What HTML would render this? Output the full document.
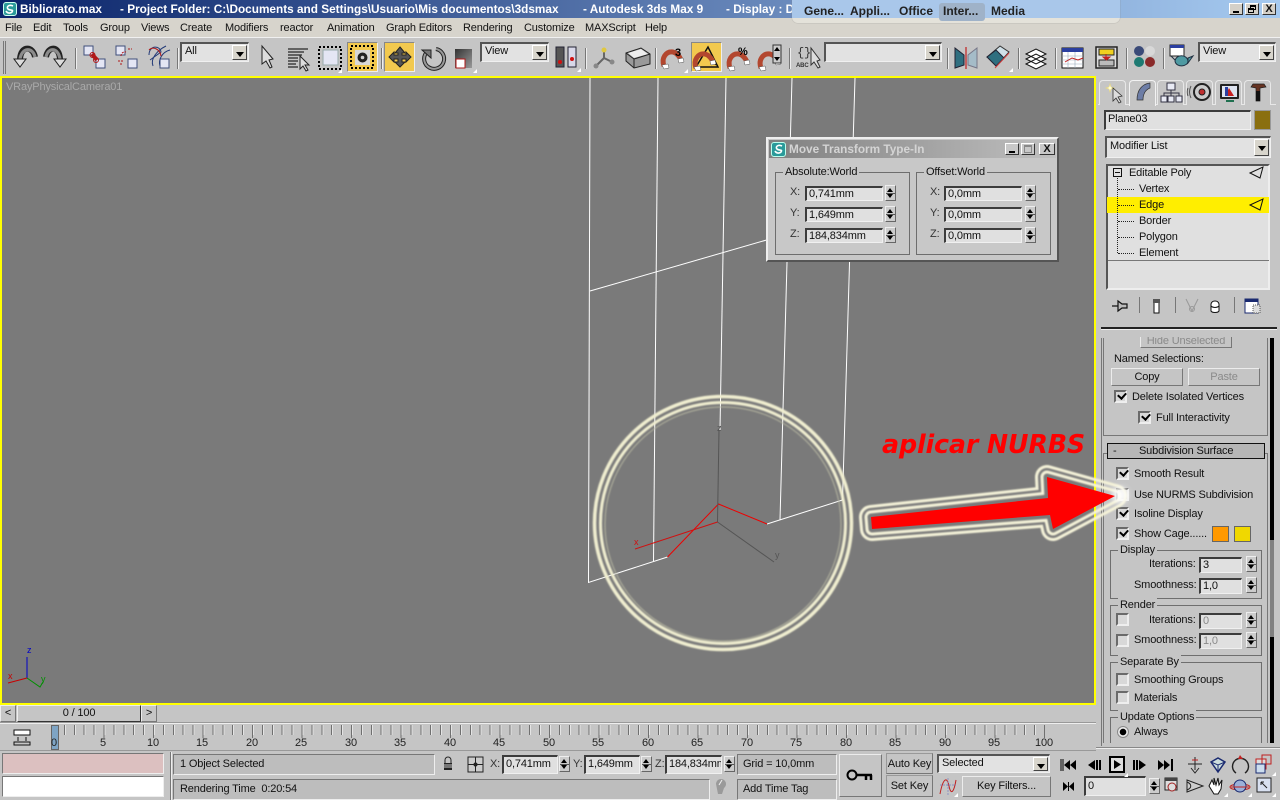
<!DOCTYPE html>
<html><head><meta charset="utf-8"><title>3ds Max</title>
<style>
html,body{margin:0;padding:0;width:1280px;height:800px;overflow:hidden;background:#c5c5c5;font:11px/14px "Liberation Sans",sans-serif;color:#111;letter-spacing:-.15px}
div,span{box-sizing:border-box}
.a{position:absolute}
.t{position:absolute;white-space:nowrap;line-height:14px;font-size:11px}
.h{font-size:11.8px;font-weight:bold;color:#fff;letter-spacing:0}
.f{position:absolute;background:#e0e0e0;border-top:2px solid #3c3c3c;border-left:2px solid #3c3c3c;border-right:1px solid #f0f0f0;border-bottom:1px solid #f0f0f0;line-height:12px;padding-left:2px;white-space:nowrap;overflow:hidden}
.d{color:#8a8a8a}
.sp{position:absolute;width:11px;height:16px;background:linear-gradient(#ccc 0 7px,#555 7px 8px,#ccc 8px);border:1px solid;border-color:#eee #666 #666 #eee}
.sp:before,.sp:after{content:"";position:absolute;left:1px;border-left:3.5px solid transparent;border-right:3.5px solid transparent}
.sp:before{top:2px;border-bottom:4px solid #000}
.sp:after{bottom:2px;border-top:4px solid #000}
.dd{position:absolute;background:#e2e2e2;border-top:2px solid #555;border-left:2px solid #555;border-right:1px solid #f0f0f0;border-bottom:1px solid #f0f0f0;line-height:15px;padding-left:3px;white-space:nowrap}
.ab{position:absolute;right:1px;top:1px;bottom:1px;width:15px;background:#d8d5cc;border:1px solid;border-color:#fff #444 #444 #fff}
.ab:after{content:"";position:absolute;left:3px;top:6px;border-left:4px solid transparent;border-right:4px solid transparent;border-top:5px solid #000}
.b{position:absolute;background:#c5c5c5;border:1px solid;border-color:#ececec #777 #777 #ececec;text-align:center;white-space:nowrap}
.c{position:absolute;width:13px;height:13px;background:#d8d8d8;border:2px solid;border-color:#6a6a6a #eee #eee #6a6a6a}
.k:after{content:"";position:absolute;left:2px;top:0;width:6px;height:4px;border-left:2px solid #000;border-bottom:2px solid #000;transform:rotate(-48deg)}
.g{position:absolute;border:1px solid #6e6e6e}
.l{position:absolute;top:-8px;left:7px;background:#c5c5c5;padding:0 2px;line-height:14px;white-space:nowrap}
.s{position:absolute;top:48px;width:2px;height:21px;border-left:1px solid #777;border-right:1px solid #eee}
.w{position:absolute;top:3px;width:14px;height:12px;background:#d4d0c8;border:1px solid;border-color:#fff #333 #333 #fff}
.y{position:absolute;background:#f2c94f;border:1px solid;border-color:#888 #eee #eee #888}
.n{position:absolute;top:736px;width:24px;text-align:center;line-height:14px;font-size:11px;color:#222}
.tab{position:absolute;top:80px;width:27px;height:25px;background:#c5c5c5;border:1px solid #e8e8e8;border-bottom:none;border-radius:4px 4px 0 0}
</style></head><body>

<!-- Title bar -->
<div class="a" style="left:0;top:0;width:1280px;height:18px;background:linear-gradient(90deg,#0a246a,#a6caf0)"></div>
<div class="t h" style="left:20px;top:2px">Bibliorato.max</div>
<div class="t h" style="left:120px;top:2px">- Project Folder: C:\Documents and Settings\Usuario\Mis documentos\3dsmax</div>
<div class="t h" style="left:583px;top:2px">- Autodesk 3ds Max 9</div>
<div class="t h" style="left:726px;top:2px">- Display : Direct 3D</div>
<div class="a" style="left:3px;top:2px;width:14px;height:14px;background:#2a9a9a;border:1px solid #cfe;border-radius:3px"></div>
<div class="w" style="left:1229px"><div class="a" style="left:3px;bottom:1px;width:6px;height:2px;background:#000"></div></div>
<div class="w" style="left:1245px"><div class="a" style="left:4px;top:1px;width:6px;height:5px;border:1px solid #000;border-top-width:2px"></div><div class="a" style="left:2px;top:4px;width:6px;height:5px;border:1px solid #000;border-top-width:2px;background:#d4d0c8"></div></div>
<div class="w" style="left:1262px;font-size:11px;line-height:10px;text-align:center;font-weight:bold">X</div>

<!-- Menu row -->
<div class="a" style="left:0;top:18px;width:1280px;height:20px;background:#d7d4cc;border-bottom:1px solid #f0f0f0"></div>
<div class="t" style="left:5px;top:21px">File</div>
<div class="t" style="left:33px;top:21px">Edit</div>
<div class="t" style="left:63px;top:21px">Tools</div>
<div class="t" style="left:100px;top:21px">Group</div>
<div class="t" style="left:141px;top:21px">Views</div>
<div class="t" style="left:180px;top:21px">Create</div>
<div class="t" style="left:225px;top:21px">Modifiers</div>
<div class="t" style="left:280px;top:21px">reactor</div>
<div class="t" style="left:327px;top:21px">Animation</div>
<div class="t" style="left:386px;top:21px">Graph Editors</div>
<div class="t" style="left:463px;top:21px">Rendering</div>
<div class="t" style="left:524px;top:21px">Customize</div>
<div class="t" style="left:585px;top:21px">MAXScript</div>
<div class="t" style="left:645px;top:21px">Help</div>

<!-- Overlay switcher -->
<div class="a" style="left:792px;top:-4px;width:328px;height:27px;border-radius:0 0 6px 6px;background:linear-gradient(#a9c7ea 0 22px,#e4e2da 22px);box-shadow:0 0 1px #888"></div>
<div class="a" style="left:939px;top:3px;width:46px;height:18px;background:#9fb2c8;border-radius:3px"></div>
<div class="t" style="left:804px;top:4px;font-size:12px;font-weight:bold;color:#222;letter-spacing:0">Gene...</div>
<div class="t" style="left:850px;top:4px;font-size:12px;font-weight:bold;color:#222;letter-spacing:0">Appli...</div>
<div class="t" style="left:899px;top:4px;font-size:12px;font-weight:bold;color:#222;letter-spacing:0">Office</div>
<div class="t" style="left:943px;top:4px;font-size:12px;font-weight:bold;color:#222;letter-spacing:0">Inter...</div>
<div class="t" style="left:991px;top:4px;font-size:12px;font-weight:bold;color:#222;letter-spacing:0">Media</div>

<!-- Toolbar -->
<div class="a" style="left:3px;top:41px;width:3px;height:33px;border-left:1px solid #777;border-right:1px solid #777"></div>
<div class="s" style="left:75px"></div><div class="s" style="left:177px"></div><div class="s" style="left:381px"></div>
<div class="s" style="left:585px"></div><div class="s" style="left:655px"></div><div class="s" style="left:789px"></div>
<div class="s" style="left:947px"></div><div class="s" style="left:1018px"></div><div class="s" style="left:1055px"></div>
<div class="s" style="left:1126px"></div><div class="s" style="left:1163px"></div>
<div class="dd" style="left:180px;top:42px;width:69px;height:20px">All<span class="ab"></span></div>
<div class="dd" style="left:480px;top:42px;width:69px;height:20px">View<span class="ab"></span></div>
<div class="dd" style="left:824px;top:42px;width:118px;height:20px"><span class="ab"></span></div>
<div class="dd" style="left:1198px;top:42px;width:78px;height:20px">View<span class="ab"></span></div>
<div class="y" style="left:347px;top:42px;width:31px;height:30px"></div>
<div class="y" style="left:384px;top:42px;width:31px;height:30px"></div>
<div class="y" style="left:691px;top:42px;width:31px;height:30px"></div>

<!-- Viewport -->
<div class="a" style="left:0;top:76px;width:1096px;height:629px;background:#7a7a7a;border:2px solid #ffff00"></div>
<div class="t" style="left:6px;top:80px;color:#a9a9a9">VRayPhysicalCamera01</div>
<svg class="a" style="left:0;top:0" width="1280" height="800" viewBox="0 0 1280 800">
 <g fill="none" stroke="#fff" stroke-width="1">
  <path d="M590 78L588.5 582.5L667.5 557"/><path d="M658 78L653.5 561"/><path d="M726 78L720 430"/>
  <path d="M792 78L780 520"/><path d="M855 78L842.5 500L767 524"/><path d="M590 291L770 239"/>
 </g>
 <path d="M667.5 557L718.5 504L767 524" fill="none" stroke="#ee0000"/>
 <path d="M719 430L717.5 522L774 562" fill="none" stroke="#555"/>
 <path d="M717.5 522L635 549" fill="none" stroke="#d01010"/>
 <text x="634" y="545" font-family="Liberation Sans" font-size="9" fill="#d01010">x</text>
 <text x="775" y="558" font-family="Liberation Sans" font-size="9" fill="#555">y</text>
 <text x="717" y="431" font-family="Liberation Sans" font-size="9" fill="#555">z</text>
 <path d="M27 678V657" stroke="#0000c8" fill="none"/><path d="M27 678L8 683" stroke="#c80000" fill="none"/><path d="M27 678L40 687L43 682" stroke="#009000" fill="none"/>
 <text x="27" y="653" font-family="Liberation Sans" font-size="9" fill="#0000c8">z</text>
 <text x="8" y="679" font-family="Liberation Sans" font-size="9" fill="#c80000">x</text>
 <text x="41" y="682" font-family="Liberation Sans" font-size="9" fill="#009000">y</text>
</svg>

<!-- Move Transform dialog -->
<div class="a" style="left:766px;top:137px;width:293px;height:125px;background:#c8c8c8;border:2px solid;border-color:#eee #555 #555 #eee"></div>
<div class="a" style="left:769px;top:140px;width:287px;height:18px;background:linear-gradient(90deg,#808080,#c0c0c0)"></div>
<div class="a" style="left:771px;top:142px;width:15px;height:15px;background:#2a9a9a;border:1px solid #bfe;border-radius:3px"></div>
<div class="t" style="left:789px;top:142px;font-size:11.8px;letter-spacing:0;font-weight:bold;color:#d4d4d4">Move Transform Type-In</div>
<div class="w" style="left:1005px;top:143px;background:#c8c8c8"><div class="a" style="left:3px;bottom:1px;width:6px;height:2px;background:#000"></div></div>
<div class="w" style="left:1021px;top:143px;background:#c8c8c8"><div class="a" style="left:2px;top:1px;width:8px;height:8px;border:1px solid #888;border-top-width:2px"></div></div>
<div class="w" style="left:1039px;top:143px;width:16px;background:#c8c8c8;text-align:center;line-height:10px;font-weight:bold">X</div>
<div class="g" style="left:775px;top:172px;width:135px;height:83px"><span class="l" style="background:#c8c8c8">Absolute:World</span></div>
<div class="g" style="left:916px;top:172px;width:135px;height:83px"><span class="l" style="background:#c8c8c8">Offset:World</span></div>
<div class="t" style="left:790px;top:185px;color:#333">X:</div><div class="f" style="left:805px;top:186px;width:78px;height:15px">0,741mm</div><div class="sp" style="left:885px;top:185px"></div>
<div class="t" style="left:790px;top:206px;color:#333">Y:</div><div class="f" style="left:805px;top:207px;width:78px;height:15px">1,649mm</div><div class="sp" style="left:885px;top:206px"></div>
<div class="t" style="left:790px;top:227px;color:#333">Z:</div><div class="f" style="left:805px;top:228px;width:78px;height:15px">184,834mm</div><div class="sp" style="left:885px;top:227px"></div>
<div class="t" style="left:930px;top:185px;color:#333">X:</div><div class="f" style="left:944px;top:186px;width:78px;height:15px">0,0mm</div><div class="sp" style="left:1025px;top:185px"></div>
<div class="t" style="left:930px;top:206px;color:#333">Y:</div><div class="f" style="left:944px;top:207px;width:78px;height:15px">0,0mm</div><div class="sp" style="left:1025px;top:206px"></div>
<div class="t" style="left:930px;top:227px;color:#333">Z:</div><div class="f" style="left:944px;top:228px;width:78px;height:15px">0,0mm</div><div class="sp" style="left:1025px;top:227px"></div>

<!-- Right panel -->
<div class="a" style="left:1096px;top:76px;width:184px;height:674px;background:#c5c5c5"></div>
<div class="a" style="left:1098px;top:104px;width:178px;height:1px;background:#e8e8e8"></div>
<div class="tab" style="left:1099px"></div><div class="tab" style="left:1129px;height:26px;border-color:#f2f2f2"></div><div class="tab" style="left:1157px"></div><div class="tab" style="left:1186px"></div><div class="tab" style="left:1215px"></div><div class="tab" style="left:1244px"></div>
<div class="f" style="left:1104px;top:110px;width:147px;height:20px;line-height:15px">Plane03</div>
<div class="a" style="left:1254px;top:110px;width:17px;height:20px;background:#8a6f0f;border:1px solid #999"></div>
<div class="dd" style="left:1105px;top:136px;width:166px;height:22px;line-height:17px">Modifier List<span class="ab"></span></div>
<div class="a" style="left:1106px;top:164px;width:164px;height:126px;background:#e0e0e0;border:2px solid;border-color:#555 #eee #eee #555"></div>
<div class="a" style="left:1108px;top:260px;width:161px;height:1px;background:#777"></div>
<div class="a" style="left:1107px;top:197px;width:162px;height:16px;background:#ffee00"></div>
<div class="a" style="left:1113px;top:168px;width:9px;height:9px;border:1px solid #111"><div class="a" style="left:1px;top:3px;width:5px;height:1px;background:#111"></div></div>
<div class="a" style="left:1117px;top:178px;height:75px;border-left:1px dotted #222"></div>
<div class="a" style="left:1118px;top:189px;width:16px;border-top:1px dotted #222"></div>
<div class="a" style="left:1118px;top:205px;width:16px;border-top:1px dotted #222"></div>
<div class="a" style="left:1118px;top:221px;width:16px;border-top:1px dotted #222"></div>
<div class="a" style="left:1118px;top:237px;width:16px;border-top:1px dotted #222"></div>
<div class="a" style="left:1118px;top:253px;width:16px;border-top:1px dotted #222"></div>
<div class="t" style="left:1129px;top:166px">Editable Poly</div>
<div class="t" style="left:1139px;top:182px">Vertex</div>
<div class="t" style="left:1139px;top:198px">Edge</div>
<div class="t" style="left:1139px;top:214px">Border</div>
<div class="t" style="left:1139px;top:230px">Polygon</div>
<div class="t" style="left:1139px;top:246px">Element</div>
<div class="a" style="left:1139px;top:297px;width:1px;height:16px;background:#777"></div>
<div class="a" style="left:1175px;top:297px;width:1px;height:16px;background:#777"></div>
<div class="a" style="left:1234px;top:297px;width:1px;height:16px;background:#777"></div>
<div class="a" style="left:1101px;top:327px;width:176px;height:2px;background:#222"></div>
<div class="a" style="left:1101px;top:329px;width:176px;height:1px;background:#eee"></div>

<!-- Scroll rollouts -->
<div class="a" style="left:1101px;top:338px;width:1px;height:408px;background:#777"></div>
<div class="a" style="left:1270px;top:338px;width:4px;height:202px;background:#000"></div>
<div class="a" style="left:1270px;top:540px;width:4px;height:97px;background:#808080"></div>
<div class="a" style="left:1270px;top:637px;width:4px;height:106px;background:#000"></div>
<div class="a" style="left:1103px;top:338px;width:165px;height:98px;border:1px solid #777;border-top:none"></div>
<div class="b" style="left:1140px;top:333px;width:92px;height:15px;line-height:14px;color:#8a8a8a">Hide Unselected</div>
<div class="a" style="left:1096px;top:330px;width:184px;height:7px;background:#c5c5c5"></div>
<div class="t" style="left:1114px;top:352px">Named Selections:</div>
<div class="b" style="left:1111px;top:368px;width:72px;height:18px;line-height:16px">Copy</div>
<div class="b d" style="left:1188px;top:368px;width:72px;height:18px;line-height:16px">Paste</div>
<div class="c k" style="left:1114px;top:390px"></div><div class="t" style="left:1132px;top:390px">Delete Isolated Vertices</div>
<div class="c k" style="left:1138px;top:411px"></div><div class="t" style="left:1156px;top:411px">Full Interactivity</div>

<div class="a" style="left:1103px;top:453px;width:165px;height:290px;border:1px solid #777;border-bottom:none"></div>
<div class="a" style="left:1107px;top:443px;width:158px;height:16px;background:#b6b6b6;border:1px solid #111"></div>
<div class="t" style="left:1113px;top:444px">-</div>
<div class="t" style="left:1139px;top:444px">Subdivision Surface</div>
<div class="c k" style="left:1116px;top:467px"></div><div class="t" style="left:1134px;top:467px">Smooth Result</div>
<div class="c" style="left:1116px;top:488px"></div><div class="t" style="left:1134px;top:488px">Use NURMS Subdivision</div>
<div class="c k" style="left:1116px;top:507px"></div><div class="t" style="left:1134px;top:507px">Isoline Display</div>
<div class="c k" style="left:1116px;top:527px"></div><div class="t" style="left:1134px;top:527px">Show Cage......</div>
<div class="a" style="left:1212px;top:526px;width:17px;height:16px;background:#ff9900;border:1px solid #666"></div>
<div class="a" style="left:1234px;top:526px;width:17px;height:16px;background:#f0d800;border:1px solid #666"></div>

<div class="g" style="left:1110px;top:550px;width:152px;height:49px"><span class="l">Display</span></div>
<div class="t" style="left:1149px;top:557px">Iterations:</div><div class="f" style="left:1199px;top:557px;width:43px;height:16px">3</div><div class="sp" style="left:1246px;top:556px"></div>
<div class="t" style="left:1134px;top:578px">Smoothness:</div><div class="f" style="left:1199px;top:578px;width:43px;height:16px">1,0</div><div class="sp" style="left:1246px;top:577px"></div>
<div class="g" style="left:1110px;top:605px;width:152px;height:51px"><span class="l">Render</span></div>
<div class="c" style="left:1116px;top:613px"></div><div class="t" style="left:1149px;top:613px">Iterations:</div><div class="f d" style="left:1199px;top:613px;width:43px;height:16px">0</div><div class="sp" style="left:1246px;top:612px"></div>
<div class="c" style="left:1116px;top:634px"></div><div class="t" style="left:1134px;top:633px">Smoothness:</div><div class="f d" style="left:1199px;top:633px;width:43px;height:16px">1,0</div><div class="sp" style="left:1246px;top:632px"></div>
<div class="g" style="left:1110px;top:662px;width:152px;height:49px"><span class="l">Separate By</span></div>
<div class="c" style="left:1116px;top:673px"></div><div class="t" style="left:1134px;top:673px">Smoothing Groups</div>
<div class="c" style="left:1116px;top:691px"></div><div class="t" style="left:1134px;top:691px">Materials</div>
<div class="a" style="left:1110px;top:717px;width:152px;height:26px;border:1px solid #6e6e6e;border-bottom:none"><span class="l">Update Options</span></div>
<div class="a" style="left:1117px;top:726px;width:12px;height:12px;border-radius:50%;background:radial-gradient(circle,#000 0 3px,#e8e8e8 3.5px);border:1px solid #888"></div>
<div class="t" style="left:1134px;top:725px">Always</div>
<div class="a" style="left:1096px;top:748px;width:184px;height:1px;background:#eee"></div>
<div class="a" style="left:1096px;top:747px;width:184px;height:1px;background:#888"></div>

<!-- Time slider -->
<div class="b" style="left:0;top:705px;width:16px;height:17px;line-height:15px">&lt;</div>
<div class="b" style="left:17px;top:705px;width:124px;height:17px;line-height:15px;border-color:#eee #333 #333 #eee">0 / 100</div>
<div class="b" style="left:141px;top:705px;width:16px;height:17px;line-height:15px">&gt;</div>
<div class="a" style="left:0;top:723px;width:1096px;height:1px;background:#eee"></div>
<div class="a" style="left:0;top:722px;width:1096px;height:1px;background:#999"></div>
<div class="a" style="left:54px;top:725px;width:991px;height:10px;background:repeating-linear-gradient(90deg,#707070 0 1px,#e4e4e4 1px 2px,transparent 2px 9.9px)"></div>
<div class="a" style="left:54px;top:735px;width:991px;height:3px;background:repeating-linear-gradient(90deg,#707070 0 1px,transparent 1px 49.5px)"></div>
<div class="a" style="left:51px;top:725px;width:8px;height:25px;background:#7ea4c4;border:1px solid #666"></div>
<span class="n" style="left:42px">0</span><span class="n" style="left:91px">5</span><span class="n" style="left:141px">10</span><span class="n" style="left:190px">15</span><span class="n" style="left:240px">20</span><span class="n" style="left:289px">25</span><span class="n" style="left:339px">30</span><span class="n" style="left:388px">35</span><span class="n" style="left:438px">40</span><span class="n" style="left:487px">45</span><span class="n" style="left:537px">50</span><span class="n" style="left:586px">55</span><span class="n" style="left:636px">60</span><span class="n" style="left:685px">65</span><span class="n" style="left:735px">70</span><span class="n" style="left:784px">75</span><span class="n" style="left:834px">80</span><span class="n" style="left:883px">85</span><span class="n" style="left:933px">90</span><span class="n" style="left:982px">95</span><span class="n" style="left:1032px">100</span>

<!-- Status bar -->
<div class="a" style="left:0;top:750px;width:1096px;height:1px;background:#999"></div>
<div class="a" style="left:2px;top:753px;width:162px;height:21px;background:#dcc0c0;border:1px solid;border-color:#777 #eee #eee #777"></div>
<div class="a" style="left:2px;top:776px;width:162px;height:21px;background:#fff;border:1px solid;border-color:#777 #eee #eee #777"></div>
<div class="a" style="left:170px;top:752px;width:2px;height:48px;border-left:1px solid #777;border-right:1px solid #eee"></div>
<div class="a" style="left:173px;top:754px;width:262px;height:21px;background:#bdbdbd;border:1px solid;border-color:#777 #eee #eee #777"></div>
<div class="t" style="left:180px;top:757px">1 Object Selected</div>
<div class="a" style="left:173px;top:779px;width:537px;height:21px;background:#bdbdbd;border:1px solid;border-color:#777 #eee #eee #777"></div>
<div class="t" style="left:180px;top:782px">Rendering Time&nbsp; 0:20:54</div>
<div class="t" style="left:490px;top:757px;color:#333">X:</div><div class="f" style="left:502px;top:755px;width:56px;height:19px;line-height:15px;padding-left:2px">0,741mm</div><div class="sp" style="left:559px;top:756px"></div>
<div class="t" style="left:573px;top:757px;color:#333">Y:</div><div class="f" style="left:584px;top:755px;width:56px;height:19px;line-height:15px">1,649mm</div><div class="sp" style="left:641px;top:756px"></div>
<div class="t" style="left:655px;top:757px;color:#333">Z:</div><div class="f" style="left:665px;top:755px;width:57px;height:19px;line-height:15px">184,834mm</div><div class="sp" style="left:724px;top:756px"></div>
<div class="a" style="left:737px;top:754px;width:100px;height:21px;background:#bdbdbd;border:1px solid;border-color:#777 #eee #eee #777"></div>
<div class="t" style="left:743px;top:757px">Grid = 10,0mm</div>
<div class="a" style="left:737px;top:779px;width:100px;height:21px;background:#bdbdbd;border:1px solid;border-color:#777 #eee #eee #777"></div>
<div class="t" style="left:743px;top:782px">Add Time Tag</div>
<div class="b" style="left:839px;top:754px;width:43px;height:43px"></div>
<div class="b" style="left:886px;top:753px;width:47px;height:21px;line-height:20px;border-color:#999 #777 #777 #999">Auto Key</div>
<div class="b" style="left:886px;top:775px;width:47px;height:22px;line-height:20px;border-color:#999 #777 #777 #999">Set Key</div>
<div class="dd" style="left:937px;top:754px;width:113px;height:19px;line-height:14px">Selected<span class="ab"></span></div>
<div class="b" style="left:962px;top:776px;width:89px;height:21px;line-height:19px">Key Filters...</div>
<div class="f" style="left:1084px;top:776px;width:62px;height:20px;line-height:16px">0</div><div class="sp" style="left:1149px;top:778px"></div>

<!-- Icons -->
<svg class="a" style="left:0;top:0" width="1280" height="800" viewBox="0 0 1280 800">
 <defs>
  <g id="mag"><path d="M3 19C0 11 5 4 12 5C16 6 19 10 20 13" fill="none" stroke="#b3472f" stroke-width="5"/><path d="M1 18l6-1 1 4-5 1zM17 12l5-1 1 4-5 1z" fill="#fff" stroke="#555" stroke-width=".5"/></g>
  <g id="sq"><rect width="9" height="9" fill="#e4e6f4" stroke="#3f4f7a"/></g>
  <g id="tri"><path d="M0 4L4 4L4 0Z" fill="#fff"/></g>
  <linearGradient id="sc" x1="0" y1="0" x2="1" y2="1"><stop offset="0" stop-color="#333"/><stop offset="1" stop-color="#999"/></linearGradient>
 </defs>
 <!-- logo -->
 <path d="M13 6C9 4 6 7 8 9C10 11 14 9 12 12C10 14 7 13 6 11" fill="none" stroke="#fff" stroke-width="1.6"/>
 <path d="M782 146C778 144 775 147 777 149C779 151 783 149 781 152C779 154 776 153 775 151" fill="none" stroke="#fff" stroke-width="1.6"/>
 <!-- undo/redo -->
 <g fill="none"><path d="M35 57C33 46 21 45 20 59" stroke="#222" stroke-width="6"/><path d="M35 57C33 47 22 47 20 59" stroke="#8c8c8c" stroke-width="3.2"/></g><path d="M14 59H26L20 67Z" fill="#ddd" stroke="#222"/>
 <g fill="none"><path d="M46 57C48 46 59 45 60 59" stroke="#222" stroke-width="6"/><path d="M46 57C48 47 58 47 60 59" stroke="#8c8c8c" stroke-width="3.2"/></g><path d="M54 59H66L60 67Z" fill="#ddd" stroke="#222"/>
 <!-- link unlink bind -->
 <use href="#sq" x="84" y="46"/><use href="#sq" x="96" y="59"/><path d="M92 54L97 60" stroke="#b01818" stroke-width="4" fill="none"/><circle cx="92.5" cy="55" r="2.5" fill="none" stroke="#b01818"/><circle cx="96" cy="60" r="2.5" fill="none" stroke="#b01818"/>
 <use href="#sq" x="116" y="46"/><use href="#sq" x="128" y="59"/><path d="M121 56a4 4 0 0 1 5-4M128 49h4M118 61h5M120 64h3" stroke="#b01818" fill="none" stroke-dasharray="2 1"/>
 <use href="#sq" x="160" y="59"/><path d="M149 55C149 45 160 45 161 52L150 60M153 66C150 58 158 50 166 46M160 66C158 60 162 52 170 50" fill="none" stroke="#223a78"/><path d="M149 50C153 46 160 49 161 56" fill="none" stroke="#b01818"/>
 <!-- selects -->
 <path d="M262 46L262 64L266 61L270 68L272 67L269 60L273 59Z" fill="#ddd" stroke="#222"/>
 <path d="M288 49H308M288 52H304M288 55H302M288 58H298M288 61H298M288 64H296M288 67H298" stroke="#000" fill="none"/>
 <path d="M300 56V69L303 66L306 71L308 70L305 65L309 65Z" fill="#ddd" stroke="#222"/>
 <rect x="319" y="47" width="22" height="22" fill="none" stroke="#000" stroke-width="2" stroke-dasharray="2 2"/><rect x="323" y="50" width="15" height="15" fill="#e4e6f4" stroke="#9aa"/><use href="#tri" x="338" y="69"/>
 <rect x="351" y="46" width="22" height="22" fill="none" stroke="#000" stroke-width="2" stroke-dasharray="2 2"/><rect x="355" y="50" width="15" height="15" fill="#d8d8d8"/><circle cx="362.5" cy="57.5" r="5" fill="#222"/><circle cx="362.5" cy="57.5" r="1.8" fill="#ccc"/>
 <!-- move -->
 <path d="M400 47L405 53H402V55H406V52L411 57L406 62V59H402V62H405L400 67L395 62H398V59H394V62L389 57L394 52V55H398V53H395Z" fill="#555" stroke="#222"/>
 <!-- rotate -->
 <path d="M426 53A10 10 0 1 0 436 49" fill="none" stroke="#222" stroke-width="4"/><path d="M426 53A10 10 0 1 0 436 49" fill="none" stroke="#999" stroke-width="2"/><path d="M422 50H431V58Z" fill="#777" stroke="#222"/>
 <!-- scale -->
 <rect x="455" y="49" width="17" height="19" fill="url(#sc)"/><rect x="456" y="59" width="9" height="9" fill="#fff" stroke="#b01818"/><use href="#tri" x="473" y="69"/>
 <!-- pivot -->
 <rect x="556" y="47" width="8" height="20" fill="#555" stroke="#223"/><rect x="568" y="47" width="8" height="20" fill="#d8d8e8" stroke="#223"/><circle cx="560" cy="62" r="2" fill="#d01010"/><circle cx="572" cy="59" r="2" fill="#d01010"/><use href="#tri" x="577" y="68"/>
 <!-- manip -->
 <path d="M604 58V50M604 58L596 66M604 58L612 62" stroke="#666" stroke-width="2" fill="none"/><circle cx="604" cy="50" r="2.5" fill="#e0c840"/><circle cx="596" cy="66" r="2.5" fill="#888"/><circle cx="612" cy="62" r="2.5" fill="#888"/>
 <!-- box -->
 <path d="M626 53L641 48L650 54V64L634 68L626 61Z" fill="#999" stroke="#222"/><path d="M626 53L634 59L650 54M634 59V68" fill="none" stroke="#222"/><path d="M628 53L641 49L648 54L634 58Z" fill="#eee"/>
 <!-- snaps -->
 <use href="#mag" x="661" y="47"/><text x="675" y="56" font-family="Liberation Sans" font-size="11" font-weight="bold" fill="#000">3</text><use href="#tri" x="684" y="69"/>
 <path d="M696 67H718L708 47Z" fill="none" stroke="#111" stroke-width="1.5"/><path d="M712 55L716 65" stroke="#111" stroke-width="1.5"/>
 <use href="#mag" x="693" y="49"/>
 <use href="#mag" x="727" y="49"/><text x="738" y="55" font-family="Liberation Sans" font-size="11" font-weight="bold" fill="#000">%</text>
 <use href="#mag" x="758" y="49"/><rect x="773" y="45" width="8" height="18" fill="#ccc" stroke="#333"/><path d="M777 47L774 51H780ZM777 61L774 57H780Z" fill="#000"/>
 <!-- named sel -->
 <text x="797" y="56" font-family="Liberation Mono" font-size="12" fill="#333">{}</text><text x="796" y="67" font-family="Liberation Sans" font-size="6" font-weight="bold" fill="#333">ABC</text>
 <path d="M811 48V65L814 62L818 68L820 67L817 61L820 60Z" fill="#ddd" stroke="#333"/>
 <!-- mirror -->
 <path d="M955 48L964 55V65L955 68Z" fill="#2f6f80" stroke="#223"/><path d="M977 48L968 55V65L977 68Z" fill="#a5bcc8" stroke="#778"/><path d="M966 47V69" stroke="#c04040" stroke-width="1.5"/>
 <!-- align -->
 <path d="M987 57L1000 46L1009 52L1000 62Z" fill="#cfe0e8" stroke="#333"/><path d="M987 57L996 66L1004 58L996 50Z" fill="#2f6f80" stroke="#223"/><path d="M995 68L1009 53" stroke="#d04040"/><use href="#tri" x="1009" y="68"/>
 <!-- layers -->
 <path d="M1026 54L1036 49L1046 54L1036 59ZM1026 59L1036 54L1046 59L1036 64ZM1026 64L1036 59L1046 64L1036 69Z" fill="#fff" stroke="#111"/>
 <!-- curve editor -->
 <rect x="1062" y="48" width="21" height="20" fill="#fff" stroke="#111"/><rect x="1062" y="48" width="21" height="4" fill="#2b3fa0"/><path d="M1062 56H1083M1062 60H1083M1062 64H1083M1068 52V68M1075 52V68" stroke="#9ab" stroke-width=".6"/><path d="M1065 62L1072 58L1078 60L1083 58" stroke="#c02020" fill="none"/>
 <!-- schematic -->
 <rect x="1096" y="47" width="21" height="21" fill="#ddd" stroke="#222" stroke-width="1.5"/><rect x="1099" y="49" width="15" height="6" fill="#f0d020" stroke="#222"/><rect x="1099" y="60" width="15" height="6" fill="#bbb" stroke="#222"/><path d="M1106 54V60M1103 57H1110L1106.5 60Z" stroke="#c02020" fill="#c02020"/>
 <!-- materials -->
 <circle cx="1139" cy="51" r="5" fill="#3a4a78"/><circle cx="1150" cy="51" r="5" fill="#d8d8d8"/><circle cx="1139" cy="62" r="5" fill="#1e7a72"/><circle cx="1150" cy="62" r="5" fill="#8a2a2a"/>
 <!-- teapot -->
 <rect x="1170" y="45" width="14" height="11" fill="#fff" stroke="#222"/><rect x="1170" y="45" width="14" height="3" fill="#2b3fa0"/><path d="M1175 61C1176 54 1187 54 1188 61C1188 67 1176 68 1175 61ZM1188 58L1193 56L1188 63ZM1175 60L1171 56" fill="#4f9aa2" stroke="#234"/>
 <!-- tabs -->
 <path d="M1110 84L1111 87L1114 88L1111 89L1110 92L1109 89L1106 88L1109 87Z" fill="#ffffe0" stroke="#e8d880" stroke-width=".7"/><path d="M1113 88V101L1116 98L1119 103L1121 102L1118 97L1122 96Z" fill="#ddd" stroke="#333" stroke-width=".8"/>
 <path d="M1137 100C1137 90 1142 84 1150 83L1150 88C1145 90 1143 94 1143 100Z" fill="#6d7da6" stroke="#333" stroke-width=".7"/>
 <rect x="1167" y="83" width="8" height="7" fill="#e8eaf4" stroke="#334"/><rect x="1161" y="96" width="6" height="6" fill="#e8eaf4" stroke="#334"/><rect x="1168" y="96" width="6" height="6" fill="#e8eaf4" stroke="#334"/><rect x="1176" y="96" width="6" height="6" fill="#e8eaf4" stroke="#334"/><path d="M1171 90V96M1164 96V93H1179V96" fill="none" stroke="#334"/>
 <circle cx="1202" cy="92" r="8" fill="#ccc" stroke="#222" stroke-width="2"/><circle cx="1202" cy="92" r="3" fill="#c03030" stroke="#222"/><path d="M1191 86C1189 90 1189 94 1191 98M1188 88C1187 90 1187 94 1188 96" fill="none" stroke="#555"/>
 <rect x="1220" y="84" width="19" height="15" rx="1" fill="#222"/><rect x="1222" y="86" width="15" height="11" fill="#dfe4f0"/><path d="M1229 88L1234 96H1225Z" fill="#c82020"/><rect x="1225" y="87" width="3" height="9" fill="#2b3fa0"/><path d="M1226 101H1234" stroke="#207050" stroke-width="2"/>
 <path d="M1253 84H1264L1266 87L1260 88V101H1256V88L1251 87Z" fill="#663322" stroke="#222" stroke-width=".7"/><path d="M1256 91H1260V101H1256Z" fill="#111"/>
 <!-- stack triangles -->
 <path d="M1250 173L1263 167L1260 178Z" fill="none" stroke="#111"/><path d="M1250 205L1263 199L1260 210Z" fill="none" stroke="#111"/>
 <!-- pin etc -->
 <path d="M1112 306H1118M1118 301V311L1122 308H1127V304H1122Z" fill="#bbb" stroke="#111" stroke-width="1.2"/>
 <rect x="1153" y="299" width="7" height="4" fill="#555"/><path d="M1154 303V313H1159V303" fill="#fff" stroke="#111"/>
 <path d="M1186 299L1192 311L1198 299" fill="none" stroke="#999"/><circle cx="1192" cy="309" r="2.5" fill="none" stroke="#999"/>
 <path d="M1211 304C1212 300 1218 300 1219 304V311C1218 313 1212 313 1211 311Z" fill="#fff" stroke="#111"/><path d="M1211 306C1213 308 1217 308 1219 306" fill="none" stroke="#111"/>
 <rect x="1245" y="299" width="13" height="14" fill="#fff" stroke="#1a2a70"/><rect x="1245" y="299" width="13" height="3" fill="#1a2a70"/><rect x="1253" y="305" width="7" height="8" fill="#ddd" stroke="#555" stroke-dasharray="1 1"/>
 <!-- timeline config -->
 <rect x="14" y="730" width="16" height="5" fill="#fff" stroke="#111"/><path d="M14 742H30V745H14ZM18 741V737M26 737V741" fill="none" stroke="#111"/>
 <!-- lock & axis -->
 <path d="M445 763V760a3 3 0 0 1 6 0V763" fill="none" stroke="#222"/><rect x="444" y="763" width="8" height="7" fill="#222"/><path d="M444 765H452M444 767H452" stroke="#ccc"/>
 <rect x="468" y="757" width="15" height="15" fill="#ccc" stroke="#222"/><path d="M475.5 757V772M468 764.5H483" stroke="#222"/><circle cx="475.5" cy="764.5" r="2" fill="#222"/>
 <!-- time tag -->
 <path d="M716 784a5 5 0 1 1 8 4L722 794H718Z" fill="#9a9a9a"/><path d="M722 780l-3 5" stroke="#eee"/>
 <!-- key -->
 <circle cx="852" cy="775" r="4.5" fill="none" stroke="#000" stroke-width="2"/><path d="M856 775H872M866 775V780M871 775V780" stroke="#000" stroke-width="2.5" fill="none"/>
 <!-- curve -->
 <path d="M940 794C943 778 947 776 949 786C951 796 954 792 956 780" fill="none" stroke="#c02020"/><path d="M940 785H956M948 778V795" stroke="#7a80c0" stroke-width=".7" stroke-dasharray="2 1"/><use href="#tri" x="954" y="793"/>
 <!-- playback -->
 <path d="M1061 759V771M1063 759V771" stroke="#000"/><path d="M1064 765L1070 760V770ZM1070 765L1076 760V770Z" fill="#000"/>
 <path d="M1088 765L1095 760V770ZM1096 760H1098V770H1096ZM1099 760H1101V770H1099Z" fill="#000"/>
 <rect x="1110" y="757" width="14" height="15" fill="#ddd" stroke="#000" stroke-width="2"/><path d="M1114 760L1121 764.5L1114 769Z" fill="#000"/><use href="#tri" x="1124" y="773"/>
 <path d="M1133 760H1135V770H1133ZM1136 760H1138V770H1136ZM1139 760L1146 765L1139 770Z" fill="#000"/>
 <path d="M1158 760L1164 765L1158 770ZM1164 760L1170 765L1164 770ZM1171 759H1173V771H1171Z" fill="#000"/>
 <path d="M1063 782L1068 786.5L1063 791ZM1068 782H1069V791H1068ZM1074 782L1069 786.5L1074 791Z" fill="#000"/>
 <rect x="1165" y="778" width="12" height="12" fill="#ddd" stroke="#222"/><rect x="1165" y="778" width="12" height="3" fill="#444"/><circle cx="1172" cy="787" r="4" fill="#ddd" stroke="#a02020"/>
 <!-- right nav -->
 <path d="M1188 764H1202M1195 757V770M1191 768L1195 773L1199 768" fill="none" stroke="#222"/><path d="M1192 760L1198 760" stroke="#c02020"/>
 <path d="M1211 762L1218 758L1225 762L1218 772Z" fill="#cdd" stroke="#1a2a70" stroke-width="1.5"/><path d="M1211 762L1218 765L1225 762M1218 765V772" fill="none" stroke="#1a2a70"/>
 <path d="M1236 773A8 8 0 1 1 1245 773" fill="none" stroke="#222" stroke-width="1.4"/><path d="M1240 755L1238 759H1243Z" fill="#c02020"/>
 <rect x="1256" y="759" width="10" height="10" fill="#ddd" stroke="#c02020"/><rect x="1262" y="755" width="9" height="9" fill="none" stroke="#c02020"/><rect x="1256" y="764" width="9" height="9" fill="#cde" stroke="#1a2a70"/><use href="#tri" x="1272" y="772"/>
 <path d="M1187 780L1203 786L1187 792Z" fill="#ccc" stroke="#222"/><path d="M1187 782C1192 784 1192 788 1187 790" fill="none" stroke="#222"/>
 <path d="M1209 786L1212 780L1214 785V778L1216 785L1218 778L1219 785L1222 780L1221 789L1218 794H1214Z" fill="#fff" stroke="#111"/><use href="#tri" x="1224" y="793"/>
 <ellipse cx="1240" cy="787" rx="10" ry="3" fill="none" stroke="#c02020"/><circle cx="1240" cy="786" r="6" fill="#9cb0d8" stroke="#1a2a70"/><path d="M1231 787H1249" stroke="#c02020"/><use href="#tri" x="1248" y="793"/>
 <rect x="1257" y="778" width="14" height="14" fill="#d8e0f0" stroke="#222"/><path d="M1261 782L1267 788M1261 782H1264M1261 782V785" stroke="#222" fill="none"/><use href="#tri" x="1272" y="793"/>
</svg>

<!-- Annotation overlay -->
<svg class="a" style="left:0;top:0" width="1280" height="800" viewBox="0 0 1280 800">
 <defs>
  <filter id="bl" x="-10%" y="-10%" width="120%" height="120%"><feGaussianBlur stdDeviation="0.8"/></filter>
  <filter id="bl2" x="-100%" y="-100%" width="300%" height="300%"><feGaussianBlur stdDeviation="3"/></filter>
  <mask id="am" maskUnits="userSpaceOnUse" x="0" y="0" width="1280" height="800">
   <g stroke-linejoin="round">
    <path d="M871 517L1048 498L1047 477L1115 496L1053 529L1050 515L872 529Z" fill="#fff" stroke="#fff" stroke-width="24"/>
    <path d="M871 517L1048 498L1047 477L1115 496L1053 529L1050 515L872 529Z" fill="#000" stroke="#000" stroke-width="18"/>
    <path d="M871 517L1048 498L1047 477L1115 496L1053 529L1050 515L872 529Z" fill="#fff" stroke="#fff" stroke-width="13"/>
    <path d="M871 517L1048 498L1047 477L1115 496L1053 529L1050 515L872 529Z" fill="#000" stroke="#000" stroke-width="7"/>
   </g>
  </mask>
 </defs>
 <g filter="url(#bl)" fill="none">
  <ellipse cx="723" cy="523" rx="128.5" ry="126.5" stroke="#f0eed0" stroke-width="3.5"/>
  <ellipse cx="723" cy="523" rx="122.5" ry="120.5" stroke="#f0eed0" stroke-width="3"/>
  <ellipse cx="723" cy="524" rx="118" ry="117" stroke="#b5b5a0" stroke-width="1"/>
 </g>
 <g filter="url(#bl)"><rect x="840" y="450" width="300" height="100" fill="#f4f2d8" mask="url(#am)"/></g>
 <ellipse cx="1120" cy="495" rx="8" ry="8" fill="#fff" opacity=".85" filter="url(#bl2)"/>
 <path d="M871 517L1048 498L1047 477L1115 496L1053 529L1050 515L872 529Z" fill="#ff0000"/>
 <text x="882" y="453" font-family="DejaVu Sans" font-size="26" font-weight="bold" font-style="italic" fill="#ff0000" textLength="203" lengthAdjust="spacingAndGlyphs">aplicar NURBS</text>
</svg>
</body></html>
